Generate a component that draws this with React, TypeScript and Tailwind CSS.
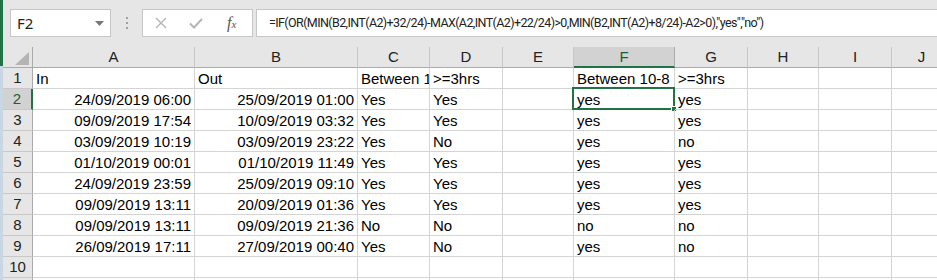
const COLS = [
  { key: "A", w: "w-[162px]" },
  { key: "B", w: "w-[163px]" },
  { key: "C", w: "w-[72px]" },
  { key: "D", w: "w-[73px]" },
  { key: "E", w: "w-[71px]" },
  { key: "F", w: "w-[101px]" },
  { key: "G", w: "w-[73px]" },
  { key: "H", w: "w-[71px]" },
  { key: "I", w: "w-[73px]" },
  { key: "J", w: "w-[60px]" },
];

const DATA: string[][] = [
  ["In", "Out", "Between 1", ">=3hrs", "", "Between 10-8", ">=3hrs"],
  ["24/09/2019 06:00", "25/09/2019 01:00", "Yes", "Yes", "", "yes", "yes"],
  ["09/09/2019 17:54", "10/09/2019 03:32", "Yes", "Yes", "", "yes", "yes"],
  ["03/09/2019 10:19", "03/09/2019 23:22", "Yes", "No", "", "yes", "no"],
  ["01/10/2019 00:01", "01/10/2019 11:49", "Yes", "Yes", "", "yes", "yes"],
  ["24/09/2019 23:59", "25/09/2019 09:10", "Yes", "Yes", "", "yes", "yes"],
  ["09/09/2019 13:11", "20/09/2019 01:36", "Yes", "Yes", "", "yes", "yes"],
  ["09/09/2019 13:11", "09/09/2019 21:36", "No", "No", "", "no", "no"],
  ["26/09/2019 17:11", "27/09/2019 00:40", "Yes", "No", "", "yes", "no"],
  [],
  [],
];

const FORMULA =
  '=IF(OR(MIN(B2,INT(A2)+32/24)-MAX(A2,INT(A2)+22/24)>0,MIN(B2,INT(A2)+8/24)-A2>0),"yes","no")';

function Toolbar() {
  return (
    <div className="flex h-[47px] items-start bg-[#e6e6e6] pt-[9px] font-['Noto_Sans',sans-serif]">
      <div className="ml-[7px] flex h-[28px] w-[101px] items-center justify-between border border-[#c6c6c6] bg-white pl-[6px] pr-[6px]">
        <span className="text-[15px] text-[#222]">F2</span>
        <svg width="9" height="5" viewBox="0 0 9 5">
          <path d="M0 0h9L4.5 5z" fill="#777" />
        </svg>
      </div>
      <div className="ml-[14px] flex h-[28px] w-[4px] flex-col items-center justify-center gap-[3px]">
        <span className="h-[2px] w-[2px] bg-[#a0a0a0]" />
        <span className="h-[2px] w-[2px] bg-[#a0a0a0]" />
        <span className="h-[2px] w-[2px] bg-[#a0a0a0]" />
      </div>
      <div className="ml-[13px] flex h-[28px] w-[111px] items-center border border-[#c6c6c6] bg-white">
        <svg className="ml-[12px]" width="12" height="12" viewBox="0 0 12 12">
          <path d="M1 1l10 10M11 1L1 11" stroke="#b5b5b5" strokeWidth="1.4" />
        </svg>
        <svg className="ml-[22px]" width="14" height="11" viewBox="0 0 14 11">
          <path d="M1 5.5l4 4L13 1" stroke="#b5b5b5" strokeWidth="2" fill="none" />
        </svg>
        <span className="ml-[24px] font-['Liberation_Serif',serif] text-[16px] italic text-[#555]">
          f<span className="text-[11px]">x</span>
        </span>
      </div>
      <div className="ml-[3px] flex h-[28px] flex-1 items-center border border-r-0 border-[#c6c6c6] bg-white pl-[12px]">
        <span className="whitespace-nowrap font-['Roboto',sans-serif] text-[12.5px] tracking-[-0.6px] text-[#222]">
          {FORMULA}
        </span>
      </div>
    </div>
  );
}

function HeaderRow() {
  return (
    <div className="flex">
      <div className="relative h-[21px] w-[30px] shrink-0 border-r border-b border-[#ababab] bg-[#e6e6e6]">
        <svg className="absolute bottom-[2px] right-[3px]" width="14" height="13" viewBox="0 0 14 13">
          <path d="M14 0V13H0z" fill="#b4b4b4" />
        </svg>
      </div>
      {COLS.map((c) => {
        const sel = c.key === "F";
        return (
          <div
            key={c.key}
            className={`h-[21px] shrink-0 text-center text-[15px] leading-[20px] ${c.w} ${
              sel
                ? "border-r border-b-2 border-r-[#ababab] border-b-[#217346] bg-[#d2d2d2] text-[#1b5e36]"
                : "border-r border-b border-r-[#c8c8c8] border-b-[#ababab] bg-[#e6e6e6] text-[#222]"
            }`}
          >
            {c.key}
          </div>
        );
      })}
    </div>
  );
}

export default function App() {
  return (
    <div className="flex h-[280px] w-[937px] overflow-hidden bg-white font-['Liberation_Sans',sans-serif]">
      <div className="flex w-[3px] shrink-0 flex-col">
        <div className="h-[66px] bg-[#217346]" />
        <div className="flex-1 bg-[#c9d6e4]" />
      </div>
      <div className="min-w-0 flex-1">
        <Toolbar />
        <HeaderRow />
        {DATA.map((row, ri) => {
          const n = ri + 1;
          const selRow = n === 2;
          return (
            <div key={n} className="flex">
              <div
                className={`h-[21px] w-[30px] shrink-0 border-b border-[#c8c8c8] text-center text-[15px] leading-[20px] ${
                  selRow
                    ? "border-r-2 border-r-[#217346] bg-[#d2d2d2] text-[#1b5e36]"
                    : "border-r border-r-[#ababab] bg-[#e6e6e6] text-[#222]"
                }`}
              >
                {n <= 10 ? n : ""}
              </div>
              {COLS.map((c, ci) => {
                const v = row[ci] ?? "";
                const sel = selRow && c.key === "F";
                return (
                  <div
                    key={c.key}
                    className={`relative h-[21px] shrink-0 whitespace-nowrap border-r border-b border-[#d4d4d4] px-[3px] pt-[1px] text-[15px] leading-[19px] text-black ${c.w} ${
                      ci < 2 && n > 1 ? "text-right" : "text-left"
                    } ${sel ? "overflow-visible" : "overflow-hidden"}`}
                  >
                    {v}
                    {sel && (
                      <div className="absolute -top-[2px] -left-[2px] -right-[1px] -bottom-[1px] border-2 border-[#217346]">
                        <div className="absolute -bottom-[4px] -right-[4px] h-[6px] w-[6px] border border-white bg-[#217346]" />
                      </div>
                    )}
                  </div>
                );
              })}
            </div>
          );
        })}
      </div>
    </div>
  );
}
